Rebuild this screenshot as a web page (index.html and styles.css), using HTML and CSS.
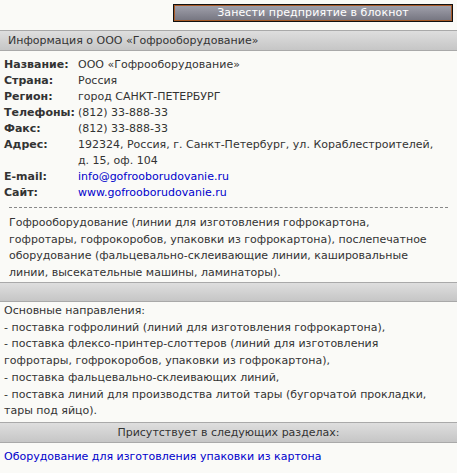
FILE: index.html
```html
<!DOCTYPE html>
<html lang="ru">
<head>
<meta charset="utf-8">
<link rel="stylesheet" href="styles.css">
</head>
<body>
<div class="topbar">
  <a class="notebook-btn" href="#">Занести предприятие в блокнот</a>
</div>
<div class="bar">Информация о ООО «Гофрооборудование»</div>
<table class="info">
  <tr><th>Название:</th><td>ООО «Гофрооборудование»</td></tr>
  <tr><th>Страна:</th><td>Россия</td></tr>
  <tr><th>Регион:</th><td>город САНКТ-ПЕТЕРБУРГ</td></tr>
  <tr><th>Телефоны:</th><td>(812) 33-888-33</td></tr>
  <tr><th>Факс:</th><td>(812) 33-888-33</td></tr>
  <tr><th>Адрес:</th><td>192324, Россия, г. Санкт-Петербург, ул. Кораблестроителей, д. 15, оф. 104</td></tr>
  <tr><th>E-mail:</th><td><a href="#">info@gofrooborudovanie.ru</a></td></tr>
  <tr><th>Сайт:</th><td><a href="#">www.gofrooborudovanie.ru</a></td></tr>
</table>
<div class="desc">Гофрооборудование (линии для изготовления гофрокартона, гофротары, гофрокоробов, упаковки из гофрокартона), послепечатное оборудование (фальцевально-склеивающие линии, кашировальные линии, высекательные машины, ламинаторы).</div>
<div class="bar empty"></div>
<div class="about">Основные направления:<br>- поставка гофролиний (линий для изготовления гофрокартона),<br>- поставка флексо-принтер-слоттеров (линий для изготовления гофротары, гофрокоробов, упаковки из гофрокартона),<br>- поставка фальцевально-склеивающих линий,<br>- поставка линий для производства литой тары (бугорчатой прокладки, тары под яйцо).</div>
<div class="bar center">Присутствует в следующих разделах:</div>
<div class="sections"><a href="#">Оборудование для изготовления упаковки из картона</a></div>
</body>
</html>
```
FILE: styles.css
```css
html, body { margin: 0; padding: 0; }
body {
  background: #fafaf7;
  font-family: "DejaVu Sans", Verdana, sans-serif;
  font-size: 11px;
  color: #333;
  width: 457px;
}
a { color: #0000cc; text-decoration: none; }
.topbar {
  display: flex;
  justify-content: flex-end;
  padding: 4px 4px 0 0;
}
.notebook-btn {
  display: block;
  width: 280px;
  height: 18px;
  box-sizing: border-box;
  border: 1px solid #111;
  box-shadow: inset 0 0 0 1px #a85a28;
  background: linear-gradient(#a2a2ad, #74747f);
  color: #fff;
  text-align: center;
  line-height: 16px;
  font-size: 11px;
  letter-spacing: 0.1px;
}
.bar {
  margin-top: 8px;
  border-top: 1px solid #a9a9a9;
  border-bottom: 1px solid #a9a9a9;
  background: linear-gradient(#dedede, #c6c6c6);
  height: 21px;
  box-sizing: border-box;
  line-height: 19px;
  padding-left: 8px;
  font-size: 11px;
  color: #333;
}
.info {
  border-collapse: collapse;
  margin: 6px 0 0 4px;
  width: 436px;
}
.info th, .info td {
  padding: 0;
  text-align: left;
  vertical-align: top;
  line-height: 16px;
}
.info th {
  width: 74px;
  font-weight: bold;
  color: #333;
  white-space: nowrap;
}
.info td { color: #333; }
.desc {
  margin: 6px 9px 0 9px;
  border-top: 1px dashed #888;
  padding: 7px 14px 1px 0;
  line-height: 16.5px;
}
.bar.empty { margin-top: 0; height: 20px; }
.about {
  padding: 1px 14px 2px 4px;
  line-height: 16.7px;
}
.bar.center { margin-top: 0; text-align: center; padding-left: 0; }
.sections {
  padding: 6px 4px;
  line-height: 16px;
}
```
